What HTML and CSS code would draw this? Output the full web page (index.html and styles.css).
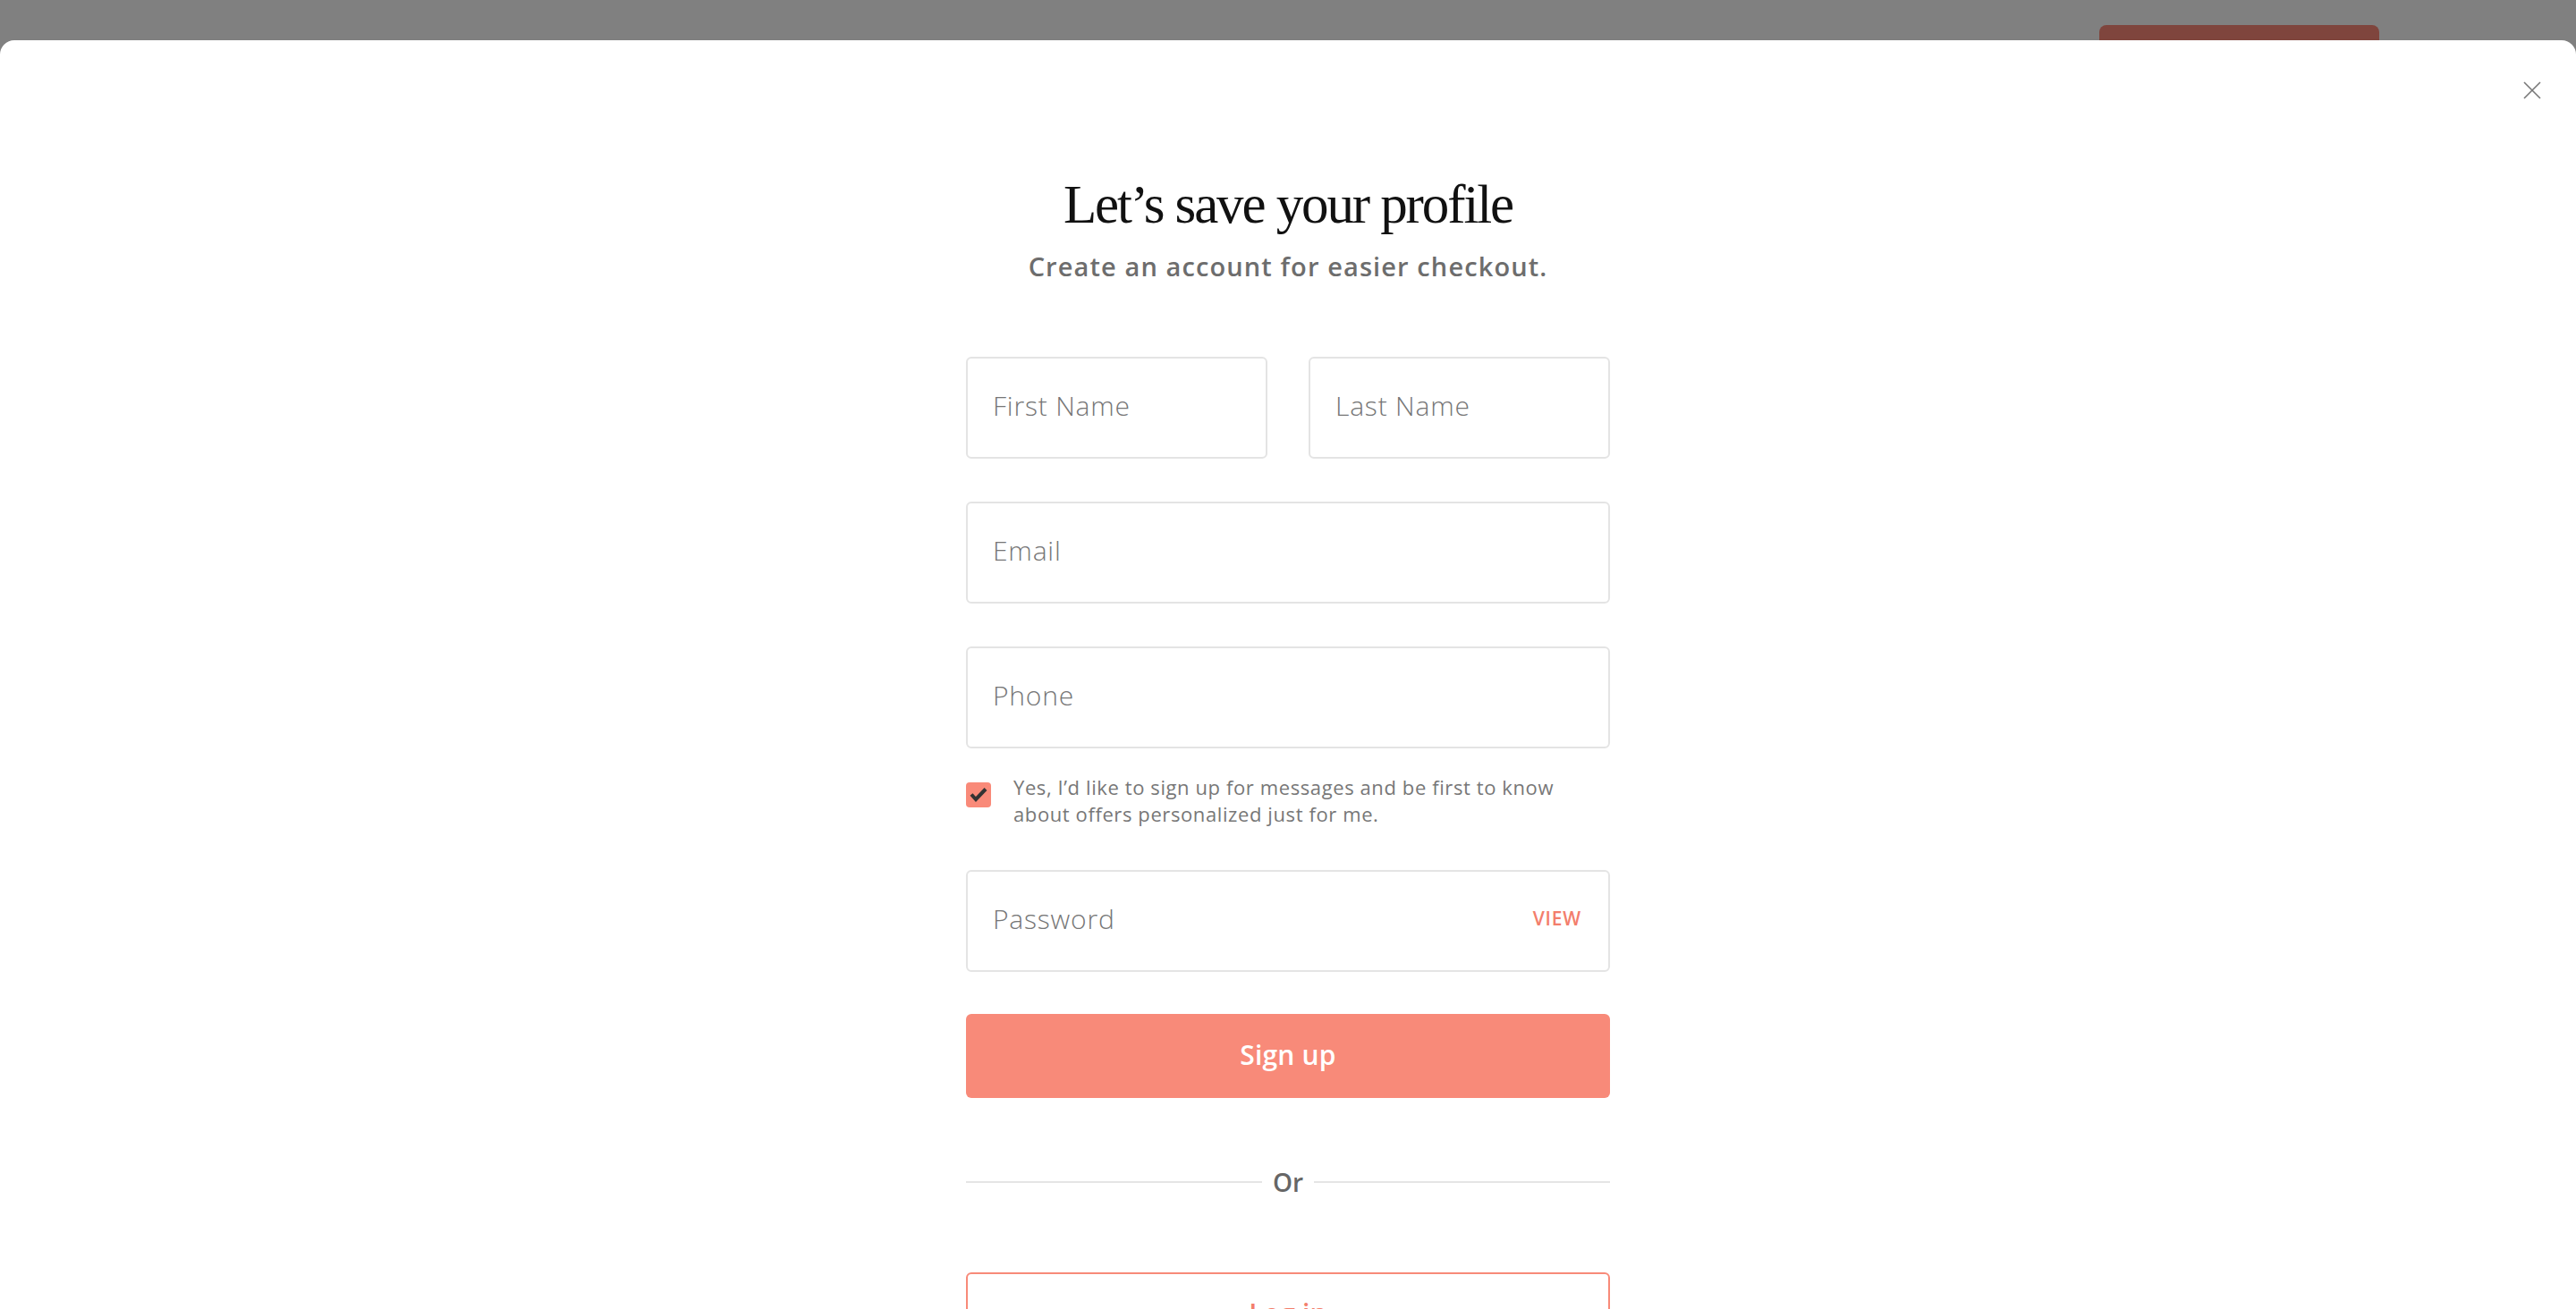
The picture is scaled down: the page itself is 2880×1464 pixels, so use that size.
FILE: index.html
```html
<!DOCTYPE html>
<html>
<head>
<meta charset="utf-8">
<title>Save your profile</title>
<link rel="stylesheet" href="styles.css">
</head>
<body>

<div class="page-bar">
	<span class="page-btn"></span>
</div>

<div class="modal">
	<button class="close" type="button" aria-label="Close">
		<svg width="20" height="20" viewBox="0 0 20 20"><path d="M1 1 L19 19 M19 1 L1 19" stroke="#777" stroke-width="1.6" fill="none"/></svg>
	</button>

	<form class="signup">
		<h1 class="title">Let’s save your profile</h1>
		<p class="subtitle">Create an account for easier checkout.</p>

		<div class="row">
			<input class="field" type="text" placeholder="First Name">
			<input class="field" type="text" placeholder="Last Name">
		</div>
		<input class="field gap" type="email" placeholder="Email">
		<input class="field gap" type="tel" placeholder="Phone">

		<label class="optin">
			<span class="check">
				<svg width="28" height="28" viewBox="0 0 28 28"><path d="M6 13.5 L11 19 L22 7.5" stroke="#333" stroke-width="4" fill="none" stroke-linejoin="miter"/></svg>
			</span>
			<span class="optin-text">Yes, I’d like to sign up for messages and be first to know about offers personalized just for me.</span>
		</label>

		<div class="field gap password">
			<input type="password" placeholder="Password">
			<span class="view">VIEW</span>
		</div>

		<button class="btn primary" type="button">Sign up</button>

		<div class="divider"><span>Or</span></div>

		<button class="btn outline" type="button">Log in</button>
	</form>
</div>

</body>
</html>
```

FILE: styles.css
```css
html, body {
	margin: 0;
	height: 100%;
	overflow: hidden;
}
body {
	background-color: #808080;
	font-family: "Open Sans", "Noto Sans", sans-serif;
}
.page-bar {
	height: 45px;
	overflow: hidden;
	display: flex;
	justify-content: flex-end;
	padding-right: 220px;
	box-sizing: border-box;
}
.page-btn {
	width: 313px;
	height: 60px;
	margin-top: 28px;
	border-radius: 8px;
	background-color: #7f453d;
}
.modal {
	position: relative;
	height: calc(100% - 45px);
	background-color: #fff;
	border-radius: 16px 16px 0 0;
	overflow: hidden;
}
.close {
	position: absolute;
	top: 46px;
	right: 39px;
	padding: 0;
	border: 0;
	background: none;
	width: 20px;
	height: 20px;
	cursor: pointer;
}
.close svg {
	display: block;
}
.signup {
	width: 720px;
	margin: 0 auto;
	padding-top: 153px;
	display: flex;
	flex-direction: column;
}
.title {
	margin: 0;
	font-family: "Liberation Serif", serif;
	font-weight: 400;
	font-size: 61px;
	line-height: 62px;
	letter-spacing: -2.1px;
	color: #111;
	text-align: center;
}
.subtitle {
	margin: 20px 0 0;
	font-weight: 600;
	font-size: 29px;
	line-height: 36px;
	letter-spacing: 1.1px;
	color: #6d6d6d;
	text-align: center;
}
.row {
	margin-top: 83px;
	display: grid;
	grid-template-columns: 1fr 1fr;
	gap: 46px;
}
.field {
	box-sizing: border-box;
	width: 100%;
	height: 114px;
	border: 2px solid #e4e4e4;
	border-radius: 6px;
	padding: 0 28px 6px;
	font-family: inherit;
	font-weight: 300;
	font-size: 30px;
	letter-spacing: 0.8px;
	color: #555;
	background: #fff;
	outline: none;
}
.field::placeholder,
.password input::placeholder {
	color: #767676;
}
.gap {
	margin-top: 48px;
}
.optin {
	margin-top: 28px;
	display: flex;
	gap: 25px;
	cursor: pointer;
}
.check {
	flex: none;
	width: 28px;
	height: 28px;
	margin-top: 10px;
	border-radius: 4px;
	background-color: #f98a79;
}
.check svg {
	display: block;
}
.optin-text {
	width: 615px;
	font-weight: 400;
	font-size: 22px;
	line-height: 30px;
	letter-spacing: 0.6px;
	color: #777;
}
.password {
	display: flex;
	align-items: center;
	padding-right: 30px;
}
.password input {
	flex: 1;
	min-width: 0;
	border: 0;
	padding: 0;
	font: inherit;
	letter-spacing: inherit;
	color: #555;
	outline: none;
	background: none;
}
.view {
	font-weight: 600;
	font-size: 21px;
	letter-spacing: 0.8px;
	color: #f37e6c;
}
.btn {
	box-sizing: border-box;
	height: 94px;
	padding-bottom: 5px;
	border-radius: 6px;
	font-family: inherit;
	font-weight: 600;
	font-size: 30px;
	letter-spacing: 0.2px;
	cursor: pointer;
}
.primary {
	margin-top: 47px;
	border: 0;
	background-color: #f88a79;
	color: #fff;
}
.outline {
	margin-top: 84px;
	border: 2px solid #f88a79;
	background-color: #fff;
	color: #f37e6c;
}
.divider {
	margin-top: 77px;
	display: flex;
	align-items: center;
	gap: 12px;
	font-weight: 600;
	font-size: 28px;
	line-height: 34px;
	color: #666;
}
.divider::before,
.divider::after {
	content: "";
	flex: 1;
	height: 2px;
	background-color: #e5e5e5;
}
```
